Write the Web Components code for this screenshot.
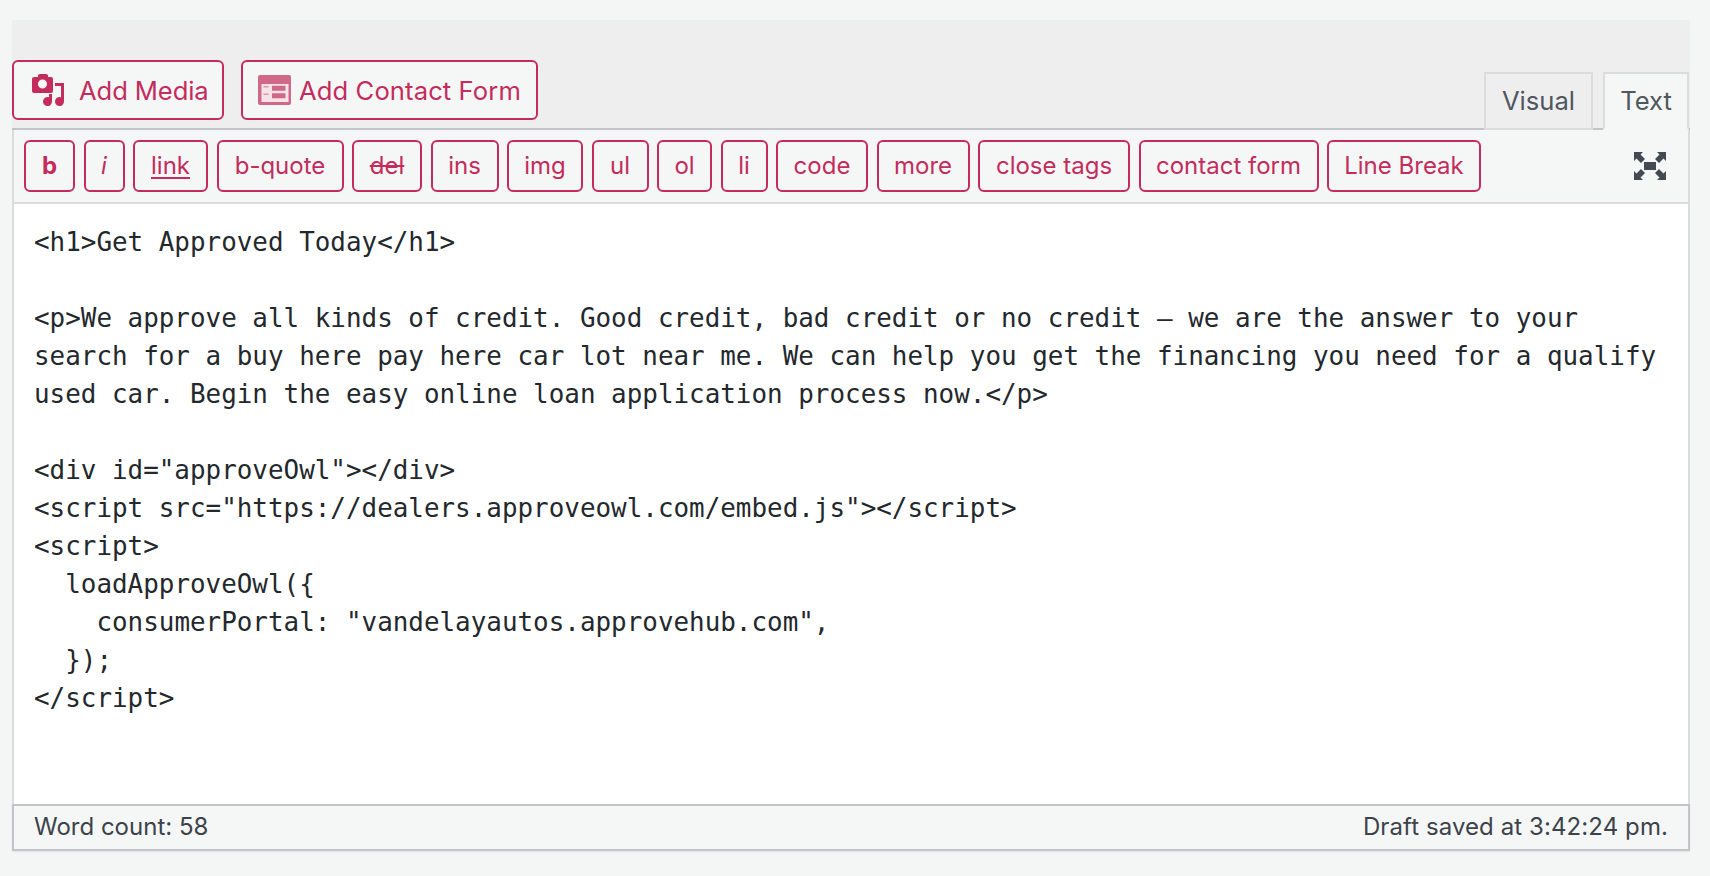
<!DOCTYPE html>
<html lang="en">
<head>
<meta charset="utf-8">
<title>Editor</title>
<style>
  html, body { margin: 0; height: 100%; background: #f4f6f6; overflow: hidden; }
  body { padding: 20px 20px 0 12px; box-sizing: border-box; font-family: Inter, "Liberation Sans", sans-serif; }
</style>
</head>
<body>
<post-editor></post-editor>

<script>
const PINK = "#c32c5c";

class MediaButton extends HTMLElement {
  constructor() {
    super();
    this.attachShadow({ mode: "open" });
    this.shadowRoot.innerHTML = `
      <style>
        :host {
          display: inline-flex;
          align-items: center;
          box-sizing: border-box;
          height: 60px;
          border: 2px solid ${PINK};
          border-radius: 6px;
          background: #f5f7f7;
          color: ${PINK};
          font-size: 25.6px;
          letter-spacing: .1px;
          white-space: nowrap;
        }
        ::slotted(svg) { flex: none; }
      </style>
      <slot name="icon"></slot><slot></slot>`;
  }
  connectedCallback() {
    this.style.width = this.getAttribute("w") + "px";
    this.style.paddingLeft = this.getAttribute("pad") + "px";
  }
}
customElements.define("media-button", MediaButton);

class TabButton extends HTMLElement {
  constructor() {
    super();
    this.attachShadow({ mode: "open" });
    this.shadowRoot.innerHTML = `
      <style>
        :host {
          display: flex;
          align-items: center;
          justify-content: center;
          box-sizing: border-box;
          height: 58px;
          padding-bottom: 2px;
          border: 2px solid #dcdcde;
          background: #eeeeee;
          color: #50575e;
          font-size: 25.6px;
          margin-bottom: -1px;
        }
        :host([active]) {
          background: #f5f7f7;
          border-bottom-color: #f5f7f7;
          position: relative;
          z-index: 1;
        }
      </style>
      <slot></slot>`;
  }
}
customElements.define("tab-button", TabButton);

class QuickTag extends HTMLElement {
  constructor() {
    super();
    this.attachShadow({ mode: "open" });
    this.shadowRoot.innerHTML = `
      <style>
        :host {
          display: flex;
          align-items: center;
          justify-content: center;
          box-sizing: border-box;
          height: 52px;
          padding-bottom: 2px;
          border: 2px solid ${PINK};
          border-radius: 6px;
          color: ${PINK};
          font-size: 24px;
          white-space: nowrap;
          background: #f5f7f7;
        }
      </style>
      <slot></slot>`;
  }
  connectedCallback() {
    this.style.width = this.getAttribute("w") + "px";
  }
}
customElements.define("quick-tag", QuickTag);

class QuickToolbar extends HTMLElement {
  constructor() {
    super();
    this.attachShadow({ mode: "open" });
    this.shadowRoot.innerHTML = `
      <style>
        :host {
          display: flex;
          align-items: center;
          gap: 8.5px;
          box-sizing: border-box;
          height: 74px;
          padding: 0 22px 0 10px;
          background: #f5f7f7;
          border-bottom: 2px solid #dcdcde;
        }
        .spacer { flex: 1; }
      </style>
      <slot></slot><span class="spacer"></span><slot name="end"></slot>`;
  }
}
customElements.define("quick-toolbar", QuickToolbar);

class StatusBar extends HTMLElement {
  constructor() {
    super();
    this.attachShadow({ mode: "open" });
    this.shadowRoot.innerHTML = `
      <style>
        :host {
          display: flex;
          align-items: center;
          justify-content: space-between;
          box-sizing: border-box;
          height: 47px;
          padding: 0 20px 3px 20px;
          border: 2px solid #c3c4c7;
          background: #f5f7f7;
          color: #3c434a;
          font-size: 24px;
          box-shadow: 0 1px 2px rgba(0,0,0,.08);
        }
        ::slotted([slot="right"]) { letter-spacing: .09px; }
      </style>
      <slot name="left"></slot><slot name="right"></slot>`;
  }
}
customElements.define("status-bar", StatusBar);

class PostEditor extends HTMLElement {
  constructor() {
    super();
    this.attachShadow({ mode: "open" });
    this.shadowRoot.innerHTML = `
      <style>
        :host { display: block; width: 1678px; }
        .band {
          display: flex;
          align-items: flex-start;
          box-sizing: border-box;
          height: 110px;
          padding-top: 40px;
          background: #eeeeee;
          border-bottom: 2px solid #c3c4c7;
        }
        .band media-button + media-button { margin-left: 17px; }
        .tabs { display: flex; gap: 10px; margin-left: auto; margin-top: 12px; padding-right: 1px; }
        .tabs tab-button:first-child { width: 109px; }
        .tabs tab-button:last-child { width: 86px; }
        .box { border-left: 2px solid #dcdcde; border-right: 2px solid #dcdcde; }
        .code {
          box-sizing: border-box;
          height: 600px;
          margin: 0;
          padding: 19px 20px 0 20px;
          background: #fff;
          color: #23282d;
          font: 25.92px/38px "DejaVu Sans Mono", "Liberation Mono", monospace;
          white-space: pre-wrap;
          word-break: normal;
          overflow: hidden;
        }
        u { text-underline-offset: 3px; }
        .media-icon { margin-right: 14px; }
        .form-icon { margin-right: 8px; }
        .tight { letter-spacing: -.1px; }
      </style>
      <div class="band">
        <media-button w="212" pad="18">
          <svg class="media-icon" slot="icon" width="33" height="33" viewBox="0 0 33 33">
            <path fill="${PINK}" fill-rule="evenodd" d="M6 1.500Q6 0 8 0h6q2 0 2 1.500V3h3q2 0 2 2v12q0 2-2 2H2q-2 0-2-2V5q0-2 2-2h4zM10.500 5.500a4.500 4.500 0 1 0 0 9a4.500 4.500 0 0 0 0-9z"/>
            <path fill="${PINK}" d="M23 9h9v18.500a4.500 4.500 0 1 1-3-4.200V12h-6zM17 20h3v7.500a4.500 4.500 0 1 1-3-4.200z"/>
          </svg>
          <span class="tight">Add Media</span>
        </media-button>
        <media-button w="297" pad="15">
          <svg class="form-icon" slot="icon" width="33" height="30" viewBox="0 0 33 30">
            <rect width="33" height="30" rx="2" fill="#d0688a"/>
            <rect x="3.500" y="9" width="27" height="18" fill="#f5e3e9"/>
            <path fill="#d0688a" d="M14 10.700h13.500v5H14zM14 18.300h13.500v5H14z"/>
            <path fill="#dc9ab0" d="M5.500 11h5v1.500h-5zM5.500 18.500h5v1.500h-5z"/>
          </svg>
          Add Contact Form
        </media-button>
        <div class="tabs">
          <tab-button>Visual</tab-button>
          <tab-button active>Text</tab-button>
        </div>
      </div>
      <div class="box">
        <quick-toolbar>
          <quick-tag w="51"><b>b</b></quick-tag>
          <quick-tag w="41"><i>i</i></quick-tag>
          <quick-tag w="75"><u>link</u></quick-tag>
          <quick-tag w="127">b-quote</quick-tag>
          <quick-tag w="70"><s>del</s></quick-tag>
          <quick-tag w="68">ins</quick-tag>
          <quick-tag w="76">img</quick-tag>
          <quick-tag w="57">ul</quick-tag>
          <quick-tag w="55">ol</quick-tag>
          <quick-tag w="47">li</quick-tag>
          <quick-tag w="92">code</quick-tag>
          <quick-tag w="93">more</quick-tag>
          <quick-tag w="152">close tags</quick-tag>
          <quick-tag w="180">contact form</quick-tag>
          <quick-tag w="154">Line Break</quick-tag>
          <svg slot="end" width="32" height="28" viewBox="0 0 32 28">
            <path fill="#434a51" d="M10 10h12v8H10zM0 0h9L6.500 2.500 11 7 7 11 2.500 6.500 0 9zM32 0h-9L25.500 2.500 21 7 25 11 29.500 6.500 32 9zM0 28h9L6.500 25.500 11 21 7 17 2.500 21.500 0 19zM32 28h-9L25.500 25.500 21 21 25 17 29.500 21.500 32 19z"/>
          </svg>
        </quick-toolbar>
        <pre class="code">&lt;h1&gt;Get Approved Today&lt;/h1&gt;

&lt;p&gt;We approve all kinds of credit. Good credit, bad credit or no credit – we are the answer to your search for a buy here pay here car lot near me. We can help you get the financing you need for a qualify used car. Begin the easy online loan application process now.&lt;/p&gt;

&lt;div id="approveOwl"&gt;&lt;/div&gt;
&lt;script src="https://dealers.approveowl.com/embed.js"&gt;&lt;/script&gt;
&lt;script&gt;
  loadApproveOwl({
    consumerPortal: "vandelayautos.approvehub.com",
  });
&lt;/script&gt;</pre>
      </div>
      <status-bar>
        <span slot="left">Word count: 58</span>
        <span slot="right">Draft saved at 3:42:24 pm.</span>
      </status-bar>`;
  }
}
customElements.define("post-editor", PostEditor);
</script>
</body>
</html>
